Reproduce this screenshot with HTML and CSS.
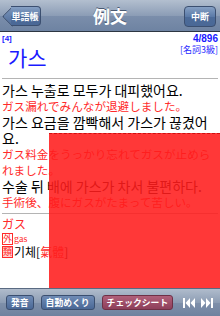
FILE: index.html
```html
<!DOCTYPE html>
<html>
<head>
<meta charset="utf-8">
<link rel="stylesheet" href="styles.css">
</head>
<body>
<div class="screen">
  <div class="nav">
    <div class="back"><span>単語帳</span></div>
    <div class="title">例文</div>
    <div class="navbtn">中断</div>
  </div>
  <div class="content">
    <div class="head">
      <div class="hleft">
        <div class="num">[4]</div>
        <div class="word">가스</div>
      </div>
      <div class="hright">
        <div class="count">4/896</div>
        <div class="level">[名詞3級]</div>
      </div>
    </div>
    <div class="sep"></div>
    <div class="ex">
      <div class="ko">가스 누출로 모두가 대피했어요.</div>
      <div class="ja">ガス漏れでみんなが退避しました。</div>
      <div class="ko">가스 요금을 깜빡해서 가스가 끊겼어요.</div>
      <div class="ja">ガス料金をうっかり忘れてガスが止められました。</div>
      <div class="ko">수술 뒤 배에 가스가 차서 불편하다.</div>
      <div class="ja">手術後、腹にガスがたまって苦しい。</div>
    </div>
    <div class="sep sep2"></div>
    <div class="meaning">ガス</div>
    <div class="rel"><span class="box">外</span><span class="en">gas</span></div>
    <div class="rel"><span class="box fill">類</span><span class="ko2">기체[<span class="red">氣體</span>]</span></div>
    <div class="sheet"></div>
  </div>
  <div class="toolbar">
    <div class="tbtn">発音</div>
    <div class="tbtn">自動めくり</div>
    <div class="tbtn pink">チェックシート</div>
    <div class="skip">
      <svg width="14" height="12" viewBox="0 0 14 12"><rect x="1" y="1" width="2" height="10" fill="#fff"/><path d="M8 1 L3.5 6 L8 11 Z M13 1 L8.5 6 L13 11 Z" fill="#fff"/></svg>
      <svg width="14" height="12" viewBox="0 0 14 12"><path d="M1 1 L5.5 6 L1 11 Z M6 1 L10.5 6 L6 11 Z" fill="#fff"/><rect x="11" y="1" width="2" height="10" fill="#fff"/></svg>
    </div>
  </div>
</div>
</body>
</html>
```

FILE: styles.css
```css
html, body { margin: 0; padding: 0; }
body { width: 220px; height: 316px; overflow: hidden; background: #fff; font-family: "Noto Sans CJK JP", "Noto Sans", sans-serif; }
.screen { width: 220px; height: 316px; display: flex; flex-direction: column; }
.nav {
  height: 32px; flex: none;
  background: linear-gradient(#b3bfcf 0%, #8c9db6 50%, #7b8eab 51%, #6e83a2 100%);
  border-bottom: 1px solid #2d3642;
  box-sizing: border-box;
  display: flex; align-items: center; justify-content: space-between;
  padding: 0 4px 0 3px; position: relative;
}
.title {
  position: absolute; left: 0; right: 0; top: 0; bottom: 0;
  display: flex; align-items: center; justify-content: center;
  color: #fff; font-size: 17px; font-weight: bold; text-shadow: 0 -1px 0 #4a5a72;
  pointer-events: none;
}
.back {
  height: 20px; width: 38px; position: relative; margin-top: 1px;
  display: flex; align-items: center; justify-content: flex-end;
}
.back::before {
  content: ""; position: absolute; left: 2px; top: 3px; width: 14px; height: 14px;
  transform: rotate(45deg); border-radius: 2px;
  background: linear-gradient(135deg, #7d97bd, #4a6896);
  border-left: 1px solid #3b4f70; border-bottom: 1px solid #3b4f70;
}
.back span {
  position: relative; height: 20px; width: 30px; box-sizing: border-box;
  background: linear-gradient(#86a0c4, #5c7ba8 50%, #4c6b99 51%, #4a6896);
  border: 1px solid #3b4f70; border-left: none; border-radius: 0 4px 4px 0;
  color: #fff; font-size: 9px; font-weight: bold; display: flex; align-items: center; justify-content: center;
  padding-right: 1px;
}
.navbtn {
  height: 21px; width: 32px; box-sizing: border-box; margin-top: 1px;
  background: linear-gradient(#86a0c4, #5c7ba8 50%, #4c6b99 51%, #4a6896);
  border: 1px solid #3b4f70; border-radius: 4px;
  color: #fff; font-size: 9px; font-weight: bold; display: flex; align-items: center; justify-content: center;
}
.content { flex: 1; position: relative; padding: 0 2px; overflow: hidden; }
.head { display: flex; justify-content: space-between; height: 46px; }
.num { color: #1a1aff; font-size: 8px; font-weight: bold; line-height: 9px; margin-top: 2px; font-family: "Liberation Sans", sans-serif; }
.word { color: #1a1aff; font-size: 21px; line-height: 26px; margin-left: 6px; margin-top: 1px; font-family: "Noto Sans CJK KR", sans-serif; }
.hright { text-align: right; }
.count { color: #1a1aff; font-size: 10px; font-weight: bold; line-height: 11px; margin-top: 1px; font-family: "Liberation Sans", sans-serif; }
.level { color: #2a2aff; font-size: 9px; line-height: 11px; }
.sep { height: 1px; background: #b4b4b4; }
.ex { padding-top: 3px; }
.ko { font-family: "Noto Sans CJK KR", sans-serif; font-size: 14px; line-height: 16px; color: #000; letter-spacing: 0; word-spacing: 0; }
.ja { font-size: 11.6px; line-height: 16px; color: #ff2a2a; letter-spacing: 0; }
.sep2 { margin-top: 3px; }
.meaning { color: #ff2a2a; font-size: 12px; line-height: 16px; margin-top: 2px; }
.rel { display: flex; align-items: center; height: 13px; font-size: 10px; }
.box { color: #ff2a2a; border: 1px solid #ff2a2a; font-size: 9px; line-height: 9px; padding: 0; width: 9px; height: 10px; display: inline-flex; align-items: center; justify-content: center; margin-right: 1px; }
.box.fill { background: #ffd0d0; }
.en { color: #ff2a2a; font-family: "Liberation Serif", serif; font-size: 10px; }
.ko2 { font-family: "Noto Sans CJK KR", sans-serif; font-size: 12px; color: #000; }
.red { color: #ff2a2a; }
.sheet {
  position: absolute; left: 49px; right: 0; top: 101px; bottom: 0;
  background: rgba(255, 28, 28, 0.88);
  border-top: 1px dashed #d01010;
}
.toolbar {
  height: 28px; flex: none; box-sizing: border-box;
  background: linear-gradient(#b0bccc 0%, #8d9db4 50%, #7f90aa 51%, #6f829f 100%);
  border-top: 1px solid #5a6a82;
  display: flex; align-items: center; padding: 0 6px; gap: 7px;
}
.tbtn {
  height: 15px; box-sizing: border-box; padding: 0 4px;
  background: linear-gradient(#6f8bb5, #4a6896);
  border: 1px solid #3b4f70; border-radius: 3px;
  color: #fff; font-size: 8.8px; font-weight: bold;
  display: flex; align-items: center;
}
.tbtn.pink { background: linear-gradient(#b0607a, #8e3f5a); border-color: #6e3046; }
.skip { margin-left: auto; display: flex; gap: 4px; }
```
